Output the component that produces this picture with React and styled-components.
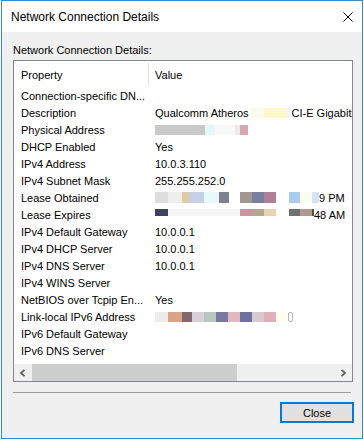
import styled, { createGlobalStyle } from 'styled-components'

const GlobalStyle = createGlobalStyle`
  html, body {
    margin: 0;
    padding: 0;
    background: #fff;
  }
  body {
    font-family: "Liberation Sans", Arial, sans-serif;
    color: #000;
  }
`

// blurred values: [width, colour]
const physical = [
  [50, '#c9c9c9'],
  [10, '#e4f8fc'],
  [20, '#f8f8f8'],
  [5, '#f0e8ea'],
  [8, '#d8a8b0'],
]
const descBlur = [
  [15, '#fbfbf2'],
  [23, '#fff8cc'],
  [5, '#f4f4f4'],
]
const obtained = [
  [13, '#dedede'],
  [14, '#eeeeee'],
  [7, '#dccca4'],
  [15, '#c8d0e6'],
  [15, '#e8f8fc'],
  [10, '#80808e'],
  [11, '#ffffff'],
  [12, '#a09890'],
  [12, '#7880a0'],
  [12, '#b08094'],
  [13, '#ffffff'],
  [11, '#a8ccf0'],
  [12, '#fcfcf0'],
  [7, '#d4e4f4'],
]
const expires = [
  [13, '#404060'],
  [72, '#f6f6f6'],
  [12, '#c898a0'],
  [12, '#b0a890'],
  [12, '#e8d4b4'],
  [13, '#ffffff'],
  [11, '#707070'],
  [12, '#b09a90'],
  [2, '#505050'],
]
const linkLocal = [
  [13, '#ececec'],
  [14, '#d8a484'],
  [10, '#806870'],
  [12, '#d8d0d8'],
  [12, '#b8c8c0'],
  [12, '#7878a0'],
  [12, '#e0b8c0'],
  [12, '#7070a0'],
  [12, '#d8c8d0'],
  [12, '#e0b0b8'],
  [12, '#fffff0'],
]

const rows = [
  { name: 'Connection-specific DN...', value: [] },
  { name: 'Description', value: ['Qualcomm Atheros', { blur: descBlur }, 'CI-E Gigabit'] },
  { name: 'Physical Address', value: [{ blur: physical }] },
  { name: 'DHCP Enabled', value: ['Yes'] },
  { name: 'IPv4 Address', value: ['10.0.3.110'] },
  { name: 'IPv4 Subnet Mask', value: ['255.255.252.0'] },
  { name: 'Lease Obtained', value: [{ blur: obtained, h: 11 }, '9 PM'] },
  { name: 'Lease Expires', value: [{ blur: expires, top: -3, h: 9 }, '48 AM'] },
  { name: 'IPv4 Default Gateway', value: ['10.0.0.1'] },
  { name: 'IPv4 DHCP Server', value: ['10.0.0.1'] },
  { name: 'IPv4 DNS Server', value: ['10.0.0.1'] },
  { name: 'IPv4 WINS Server', value: [] },
  { name: 'NetBIOS over Tcpip En...', value: ['Yes'] },
  { name: 'Link-local IPv6 Address', value: [{ blur: linkLocal, ring: true }] },
  { name: 'IPv6 Default Gateway', value: [] },
  { name: 'IPv6 DNS Server', value: [] },
]

const Window = styled.div`
  width: 362px;
  height: 439px;
  margin-left: 1px;
  box-sizing: border-box;
  border: 1px solid #3b87cf;
  background: #f0f0f0;
  display: flex;
  flex-direction: column;
`

const TitleBar = styled.div`
  height: 31px;
  flex-shrink: 0;
  background: #fff;
  display: flex;
  align-items: center;
  justify-content: space-between;
  padding: 0 9px;
  font-size: 12px;
`

const Body = styled.div`
  flex: 1;
  display: flex;
  flex-direction: column;
  padding: 11px 9px 15px 11px;
`

const Caption = styled.div`
  height: 14px;
  line-height: 14px;
  font-size: 11px;
  margin-bottom: 3px;
`

const ListView = styled.div`
  height: 322px;
  box-sizing: border-box;
  border: 1px solid #828790;
  background: #fff;
  display: flex;
  flex-direction: column;
  overflow: hidden;
  font-size: 11px;
`

const Header = styled.div`
  height: 26px;
  flex-shrink: 0;
  display: flex;
  align-items: flex-start;
`

const HeaderCell = styled.div`
  height: 23px;
  margin-top: 2px;
  display: flex;
  align-items: center;
  box-sizing: border-box;
  ${(p) => (p.$first ? 'width: 135px; padding-left: 7px; border-right: 1px solid #e5e5e5;' : 'flex: 1; padding-left: 6px;')}
`

const Rows = styled.div`
  flex: 1;
`

const Row = styled.div`
  height: 17px;
  display: flex;
  align-items: center;
  white-space: nowrap;
`

const NameCell = styled.div`
  width: 135px;
  box-sizing: border-box;
  padding-left: 7px;
  overflow: hidden;
`

const ValueCell = styled.div`
  flex: 1;
  min-width: 0;
  padding-left: 6px;
  display: flex;
  align-items: center;
  overflow: hidden;
`

const Mosaic = styled.span`
  display: inline-flex;
  flex-shrink: 0;
  align-items: center;
  position: relative;
  top: ${(p) => p.$top || 0}px;
  filter: blur(0.5px);
`

const Tile = styled.span`
  display: block;
  height: ${(p) => p.$h || 10}px;
  width: ${(p) => p.$w}px;
  background: ${(p) => p.$c};
`

const Ring = styled.span`
  display: block;
  width: 3px;
  height: 8px;
  border: 1px solid #b4b4b4;
  border-radius: 2px;
`

const Scrollbar = styled.div`
  height: 17px;
  flex-shrink: 0;
  display: flex;
  background: #f0f0f0;
`

const ArrowButton = styled.div`
  width: 17px;
  display: flex;
  align-items: center;
  justify-content: center;
`

const Track = styled.div`
  flex: 1;
  display: flex;
`

const Thumb = styled.div`
  width: 205px;
  margin-left: 1px;
  background: #cdcdcd;
`

const Separator = styled.div`
  height: 1px;
  margin: 10px 2px 0 0;
  background: #a0a0a0;
`

const ButtonRow = styled.div`
  margin: 9px -1px 0 0;
  display: flex;
  justify-content: flex-end;
`

const Button = styled.button`
  width: 74px;
  height: 21px;
  box-sizing: border-box;
  border: 2px solid #0a78d4;
  background: #e1e1e1;
  font-family: "Liberation Sans", Arial, sans-serif;
  font-size: 11px;
  color: #000;
  padding: 0;
`

const Chevron = ({ right }) => (
  <svg width='7' height='8' viewBox='0 0 7 8'>
    <path
      d={right ? 'M1.5 0.8 L5 4 L1.5 7.2' : 'M5.5 0.8 L2 4 L5.5 7.2'}
      fill='none'
      stroke='#606060'
      strokeWidth='1.8'
    />
  </svg>
)

const renderPart = (part, i) => {
  if (typeof part === 'string') return <span key={i}>{part}</span>
  return (
    <Mosaic key={i} $top={part.top}>
      {part.blur.map(([w, c], j) => (
        <Tile key={j} $w={w} $c={c} $h={part.h} />
      ))}
      {part.ring && <Ring />}
    </Mosaic>
  )
}

const App = () => {
  return (
    <>
      <GlobalStyle />
      <Window>
        <TitleBar>
          <span>Network Connection Details</span>
          <svg width='10' height='10' viewBox='0 0 10 10'>
            <path d='M0.5 0.5 L9.5 9.5 M9.5 0.5 L0.5 9.5' stroke='#000' strokeWidth='1' />
          </svg>
        </TitleBar>
        <Body>
          <Caption>Network Connection Details:</Caption>
          <ListView>
            <Header>
              <HeaderCell $first>Property</HeaderCell>
              <HeaderCell>Value</HeaderCell>
            </Header>
            <Rows>
              {rows.map((r) => (
                <Row key={r.name}>
                  <NameCell>{r.name}</NameCell>
                  <ValueCell>{r.value.map(renderPart)}</ValueCell>
                </Row>
              ))}
            </Rows>
            <Scrollbar>
              <ArrowButton>
                <Chevron />
              </ArrowButton>
              <Track>
                <Thumb />
              </Track>
              <ArrowButton>
                <Chevron right />
              </ArrowButton>
            </Scrollbar>
          </ListView>
          <Separator />
          <ButtonRow>
            <Button>Close</Button>
          </ButtonRow>
        </Body>
      </Window>
    </>
  )
}

export default App
